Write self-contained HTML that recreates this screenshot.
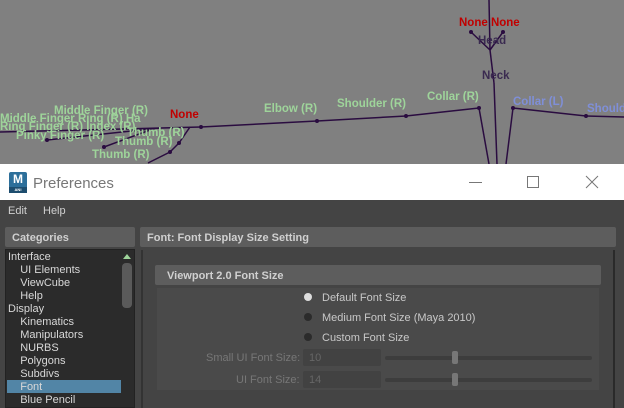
<!DOCTYPE html>
<html><head><style>
*{margin:0;padding:0;box-sizing:border-box}
body{width:624px;height:408px;overflow:hidden;background:#808080;font-family:"Liberation Sans",sans-serif;position:relative}
.a{position:absolute}
.t{font-size:11px;color:#d0d0d0;white-space:nowrap}
.lbl{font-size:11.5px;font-weight:bold;white-space:nowrap;position:absolute}
.g{color:#9ed49a}.b{color:#7f8fd8}.r{color:#c00000}
</style></head><body>
<svg class="a" style="left:0;top:0" width="624" height="164">
<g stroke="#2a0c40" stroke-width="1.5" fill="none">
<line x1="489" y1="0" x2="490" y2="50"/>
<line x1="490" y1="50" x2="471" y2="32"/><line x1="490" y1="50" x2="503" y2="32"/>
<line x1="490" y1="50" x2="494" y2="83"/><line x1="494" y1="83" x2="497" y2="164"/>
<line x1="479" y1="108" x2="489" y2="164"/><line x1="513" y1="108" x2="506" y2="164"/>
<line x1="479" y1="108" x2="406" y2="116"/><line x1="406" y1="116" x2="317" y2="121"/><line x1="317" y1="121" x2="201" y2="127"/>
<line x1="513" y1="108" x2="586" y2="116"/><line x1="586" y1="116" x2="624" y2="117"/>
<line x1="201" y1="127" x2="0" y2="132"/><line x1="190" y1="127" x2="179" y2="143"/><line x1="179" y1="143" x2="170" y2="152"/><line x1="170" y1="152" x2="148" y2="163"/>
<line x1="150" y1="130" x2="104" y2="147"/><line x1="160" y1="128" x2="47" y2="140"/>
</g>
<g fill="#2a0c40"><circle cx="471" cy="32" r="2"/><circle cx="503" cy="32" r="2"/><circle cx="479" cy="108" r="2"/><circle cx="513" cy="108" r="2"/><circle cx="406" cy="116" r="2"/><circle cx="317" cy="121" r="2"/><circle cx="586" cy="116" r="2"/><circle cx="201" cy="127" r="2"/><circle cx="104" cy="147" r="2"/><circle cx="47" cy="140" r="2"/><circle cx="179" cy="143" r="2"/><circle cx="170" cy="152" r="2"/></g>
</svg>
<div class="lbl r" style="left:459px;top:17px">None None</div>
<div class="lbl" style="left:478px;top:35px;color:#3a2a50">Head</div>
<div class="lbl" style="left:482px;top:70px;color:#3a2a50">Neck</div>
<div class="lbl g" style="left:264px;top:103px">Elbow (R)</div>
<div class="lbl g" style="left:337px;top:98px">Shoulder (R)</div>
<div class="lbl g" style="left:427px;top:91px">Collar (R)</div>
<div class="lbl b" style="left:513px;top:96px">Collar (L)</div>
<div class="lbl b" style="left:587px;top:103px">Should</div>
<div class="lbl g" style="left:54px;top:105px">Middle Finger (R)</div>
<div class="lbl g" style="left:0px;top:113px">Middle Finger Ring (R) Ha</div>
<div class="lbl g" style="left:0px;top:121px">Ring Finger (R) Index (R)</div>
<div class="lbl r" style="left:170px;top:109px">None</div>
<div class="lbl g" style="left:16px;top:130px">Pinky Finger (R)</div>
<div class="lbl g" style="left:127px;top:127px">Thumb (R)</div>
<div class="lbl g" style="left:115px;top:136px">Thumb (R)</div>
<div class="lbl g" style="left:92px;top:149px">Thumb (R)</div>

<div class="a" style="left:0;top:164px;width:624px;height:36px;background:#fff"></div>
<div class="a" style="left:9px;top:172px;width:18px;height:21px;background:#2d6f9a;border-radius:2px;color:#fff;font-weight:bold;font-size:12px;text-align:center;line-height:15px">M<div style="height:6px;background:#1d4d6e;font-size:4px;line-height:6px">ANI</div></div>
<div class="a" style="left:33px;top:175px;font-size:15px;color:#777">Preferences</div>
<div class="a" style="left:469px;top:182px;width:13px;height:1px;background:#777"></div>
<div class="a" style="left:527px;top:176px;width:12px;height:12px;border:1px solid #777"></div>
<svg class="a" style="left:585px;top:175px" width="14" height="14"><path d="M1 1L13 13M13 1L1 13" stroke="#777"/></svg>

<div class="a" style="left:0;top:200px;width:624px;height:208px;background:#444"></div>
<div class="a t" style="left:8px;top:205px">Edit</div>
<div class="a t" style="left:43px;top:205px">Help</div>
<div class="a" style="left:5px;top:227px;width:130px;height:20px;background:#5d5d5d;border-radius:2px"></div>
<div class="a t" style="left:12px;top:232px;font-weight:bold">Categories</div>
<div class="a" style="left:140px;top:227px;width:476px;height:20px;background:#5d5d5d;border-radius:2px"></div>
<div class="a t" style="left:147px;top:232px;font-weight:bold">Font: Font Display Size Setting</div>
<div class="a" style="left:5px;top:249px;width:130px;height:159px;background:#2b2b2b;border:1px solid #222"></div>
<div class="a" style="left:122px;top:263px;width:10px;height:45px;background:#5a5a5a;border-radius:4px"></div>
<div class="a" style="left:123px;top:254px;width:0;height:0;border-left:4px solid transparent;border-right:4px solid transparent;border-bottom:5px solid #9ed49a"></div>
<div class="a" style="left:7px;top:380px;width:114px;height:13px;background:#5285a6"></div>
<div class="a t" style="left:8px;top:251px;line-height:13px;color:#d8d8d8">Interface<br>&nbsp;&nbsp;&nbsp;&nbsp;UI Elements<br>&nbsp;&nbsp;&nbsp;&nbsp;ViewCube<br>&nbsp;&nbsp;&nbsp;&nbsp;Help<br>Display<br>&nbsp;&nbsp;&nbsp;&nbsp;Kinematics<br>&nbsp;&nbsp;&nbsp;&nbsp;Manipulators<br>&nbsp;&nbsp;&nbsp;&nbsp;NURBS<br>&nbsp;&nbsp;&nbsp;&nbsp;Polygons<br>&nbsp;&nbsp;&nbsp;&nbsp;Subdivs<br>&nbsp;&nbsp;&nbsp;&nbsp;Font<br>&nbsp;&nbsp;&nbsp;&nbsp;Blue Pencil</div>
<div class="a" style="left:141px;top:250px;width:2px;height:158px;background:#333"></div>
<div class="a" style="left:613px;top:250px;width:2px;height:158px;background:#2a2a2a"></div>
<div class="a" style="left:155px;top:265px;width:446px;height:20px;background:#5d5d5d;border-radius:2px"></div>
<div class="a t" style="left:167px;top:270px;font-weight:bold">Viewport 2.0 Font Size</div>
<div class="a" style="left:157px;top:288px;width:442px;height:102px;background:#4a4a4a"></div>
<div class="a" style="left:304px;top:293px;width:8px;height:8px;border-radius:50%;background:#ddd"></div>
<div class="a" style="left:304px;top:313px;width:8px;height:8px;border-radius:50%;background:#2b2b2b"></div>
<div class="a" style="left:304px;top:333px;width:8px;height:8px;border-radius:50%;background:#2b2b2b"></div>
<div class="a t" style="left:322px;top:292px;color:#c8c8c8">Default Font Size</div>
<div class="a t" style="left:322px;top:312px;color:#c8c8c8">Medium Font Size (Maya 2010)</div>
<div class="a t" style="left:322px;top:332px;color:#c8c8c8">Custom Font Size</div>
<div class="a t" style="left:206px;top:352px;color:#777">Small UI Font Size:</div>
<div class="a t" style="left:236px;top:374px;color:#777">UI Font Size:</div>
<div class="a" style="left:303px;top:349px;width:78px;height:17px;background:#424242;border-radius:2px"></div>
<div class="a" style="left:303px;top:371px;width:78px;height:17px;background:#424242;border-radius:2px"></div>
<div class="a t" style="left:309px;top:352px;color:#666">10</div>
<div class="a t" style="left:309px;top:374px;color:#666">14</div>
<div class="a" style="left:385px;top:356px;width:207px;height:4px;background:#3d3d3d;border-radius:2px"></div>
<div class="a" style="left:385px;top:378px;width:207px;height:4px;background:#3d3d3d;border-radius:2px"></div>
<div class="a" style="left:452px;top:351px;width:6px;height:13px;background:#777;border-radius:2px"></div>
<div class="a" style="left:452px;top:373px;width:6px;height:13px;background:#777;border-radius:2px"></div>
</body></html>
